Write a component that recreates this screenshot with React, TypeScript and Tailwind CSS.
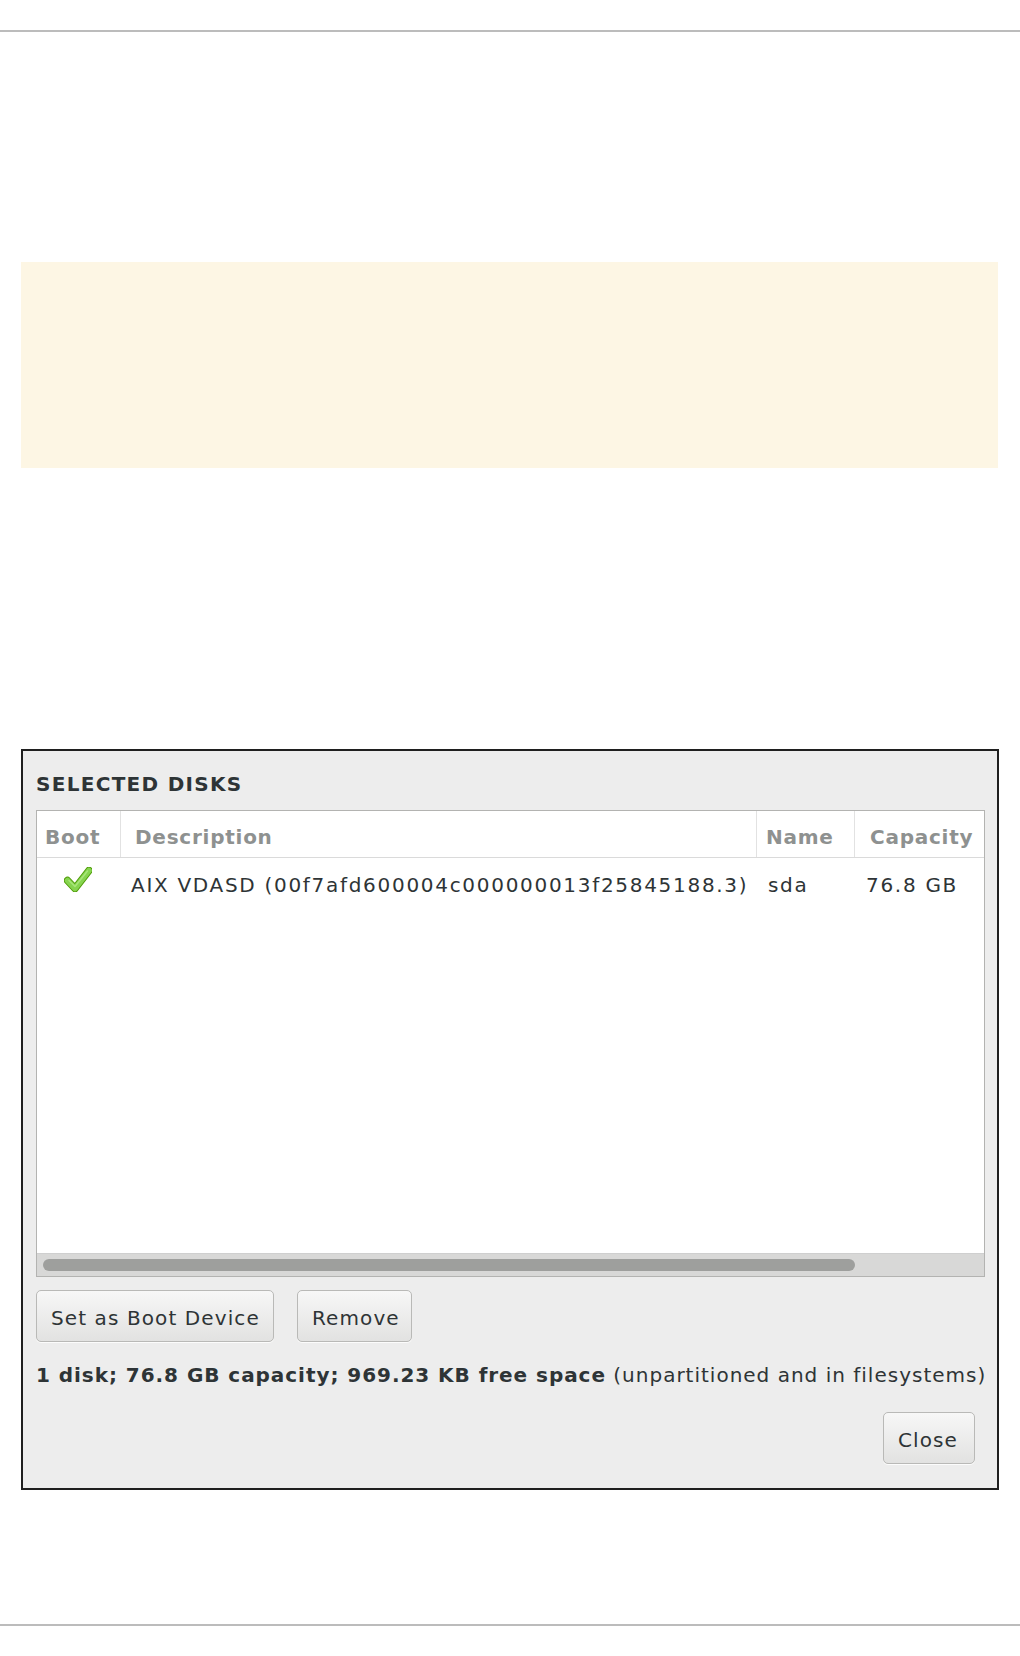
import { ReactNode } from "react";

const font = { fontFamily: '"DejaVu Sans", "Liberation Sans", sans-serif' };

function CheckIcon() {
  return (
    <svg width="28" height="25" viewBox="0 0 28 25" fill="none">
      <path d="M3.5 13.5 L11 21.5 L25 3.5" stroke="#4e9a06" strokeWidth="7.5" strokeLinecap="round" strokeLinejoin="round" />
      <path d="M3.5 13.5 L11 21.5 L25 3.5" stroke="#86d44f" strokeWidth="5.5" strokeLinecap="round" strokeLinejoin="round" />
      <path d="M5 13.5 L11 19.5 L23.5 4" stroke="#a8e67a" strokeWidth="1.5" strokeLinecap="round" strokeLinejoin="round" />
    </svg>
  );
}

function Button({ children, className = "" }: { children: ReactNode; className?: string }) {
  return (
    <div
      className={`h-[52px] whitespace-nowrap rounded-[5px] border border-[#b9b9b7] bg-gradient-to-b from-[#f7f7f7] to-[#e2e2e1] pl-[14px] pt-[15px] text-[20px] leading-[24px] tracking-[1.1px] text-[#2e3436] shadow-[0_1px_0_rgba(255,255,255,0.8)] ${className}`}
    >
      {children}
    </div>
  );
}

export default function App() {
  return (
    <div className="flex h-[1656px] w-[1020px] flex-col bg-white" style={font}>
      {/* page rules + note box */}
      <div className="mt-[30px] h-[2px] bg-[#bcbcbc]" />
      <div className="ml-[21px] mr-[22px] mt-[230px] h-[206px] bg-[#fdf6e4]" />

      {/* Selected disks dialog */}
      <div className="ml-[21px] mt-[281px] flex h-[741px] w-[978px] flex-col border-2 border-[#1f1f1f] bg-[#ededed] pl-[13px] pr-[12px] pt-[21px]">
        <div className="h-[24px] text-[20px] font-bold leading-[24px] tracking-[1.3px] text-[#2e3436]">
          SELECTED DISKS
        </div>

        <div className="mt-[14px] flex h-[467px] flex-col border border-[#b3b3b1] bg-white">
          {/* header */}
          <div className="grid h-[47px] grid-cols-[84px_636px_98px_1fr] border-b border-[#dadada] text-[20px] font-bold leading-[24px] tracking-[0.75px] text-[#8e9190]">
            <div className="border-r border-[#e2e2e2] pl-[8px] pt-[14px]">Boot</div>
            <div className="border-r border-[#e2e2e2] pl-[14px] pt-[14px]">Description</div>
            <div className="border-r border-[#e2e2e2] pl-[9px] pt-[14px]">Name</div>
            <div className="pl-[15px] pt-[14px]">Capacity</div>
          </div>

          {/* rows */}
          <div className="flex-1">
            <div className="grid grid-cols-[84px_636px_98px_1fr] text-[20px] leading-[24px] tracking-[1.7px] text-[#2e3436]">
              <div className="pl-[27px] pt-[9px]">
                <CheckIcon />
              </div>
              <div className="whitespace-nowrap pl-[10px] pt-[15px]">AIX VDASD (00f7afd600004c000000013f25845188.3)</div>
              <div className="pl-[11px] pt-[15px]">sda</div>
              <div className="pl-[11px] pt-[15px]">76.8 GB</div>
            </div>
          </div>

          {/* horizontal scrollbar */}
          <div className="flex h-[23px] items-center border-t border-[#cfcfcf] bg-[#d8d8d7] pl-[6px]">
            <div className="h-[12px] w-[812px] rounded-full bg-[#9e9f9d]" />
          </div>
        </div>

        <div className="mt-[13px] flex gap-[23px]">
          <Button className="w-[238px]">Set as Boot Device</Button>
          <Button className="w-[115px]">Remove</Button>
        </div>

        <div className="mt-[21px] h-[24px] whitespace-nowrap text-[20px] leading-[24px] tracking-[1px] text-[#2e3436]">
          <span className="font-bold tracking-[0.95px]">1 disk; 76.8 GB capacity; 969.23 KB free space</span> (unpartitioned and in filesystems)
        </div>

        <div className="mt-[25px] flex justify-end pr-[10px]">
          <Button className="w-[92px]">Close</Button>
        </div>
      </div>

      <div className="mt-[134px] h-[2px] bg-[#bcbcbc]" />
    </div>
  );
}
